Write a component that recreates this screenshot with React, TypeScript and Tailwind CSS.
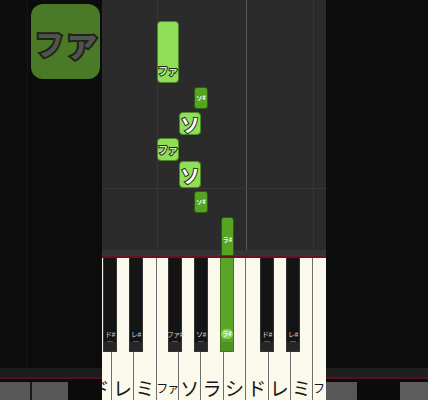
import React from "react";

const WHITE = ["ド", "レ", "ミ", "ファ", "ソ", "ラ", "シ", "ド", "レ", "ミ", "ファ"];

const BLACK = [
  { cls: "left-[1px]", t: "ド#" },
  { cls: "left-[27px]", t: "レ#" },
  { cls: "left-[66px]", t: "ファ#" },
  { cls: "left-[92px]", t: "ソ#" },
  { cls: "left-[118px]", t: "ラ#", on: true },
  { cls: "left-[158px]", t: "ド#" },
  { cls: "left-[184px]", t: "レ#" },
];

const stroke = "[paint-order:stroke_fill] [-webkit-text-stroke:2px_#1f2a18]";

function BgKeysLeft() {
  return (
    <div className="flex h-[32px] flex-col">
      <div className="h-[9px] bg-[#1c1c1c]" />
      <div className="h-[2px] bg-[#5a0f1c]" />
      <div className="h-[3px] bg-[#0c0c0c]" />
      <div className="flex h-[18px]">
        <div className="w-[30px] bg-[#575757]" />
        <div className="w-[2px] bg-[#1a1a1a]" />
        <div className="w-[36px] bg-[#575757]" />
        <div className="flex-1 bg-[#0b0b0b]" />
      </div>
    </div>
  );
}

function BgKeysRight() {
  return (
    <div className="flex h-[32px] flex-col">
      <div className="h-[9px] bg-[#1f1f1f]" />
      <div className="h-[2px] bg-[#5a0f1c]" />
      <div className="h-[3px] bg-[#0c0c0c]" />
      <div className="flex h-[18px]">
        <div className="w-[31px] bg-[#575757]" />
        <div className="w-[43px] rounded-t-[4px] bg-[#0b0b0b]" />
        <div className="flex-1 bg-[#5d5d5d]" />
      </div>
    </div>
  );
}

export default function App() {
  return (
    <div className="flex h-[400px] w-[428px] overflow-hidden bg-[#0c0c0c] font-['Noto_Sans_CJK_JP',sans-serif]">
      {/* left side */}
      <div className="flex w-[102px] flex-col">
        <div className="flex flex-1">
          <div className="w-[28px] border-r border-[#151515] bg-[#0d0d0d]" />
          <div className="pl-[3px] pt-[4px]">
            <div className="flex h-[75px] w-[69px] items-center justify-center rounded-[12px] bg-[#4a7a27] pb-[4px] pl-[2px]">
              <span className="flex items-baseline whitespace-nowrap font-bold leading-none text-[#525252] [paint-order:stroke_fill] [-webkit-text-stroke:4px_#1e2616]">
                <span className="text-[29px]">フ</span>
                <span className="text-[36px] tracking-[-2px]">ァ</span>
              </span>
            </div>
          </div>
        </div>
        <BgKeysLeft />
      </div>

      {/* center */}
      <div className="flex w-[224px] flex-col">
        <div className="relative h-[250px] bg-[#2b2b2b]">
          <div className="absolute left-[55px] top-0 h-full w-px bg-[#363636]" />
          <div className="absolute left-[144px] top-0 h-full w-px bg-[#585858]" />
          <div className="absolute left-[211px] top-0 h-full w-px bg-[#363636]" />
          <div className="absolute left-0 top-[188px] h-px w-full bg-[#363636]" />

          {/* notes */}
          <div className="absolute left-[55px] top-[21px] flex h-[62px] w-[22px] items-end justify-center rounded-[4px] border border-[#4f8a2a] bg-[#8fdf58] pb-[6px]">
            <span className={`text-[10px] font-bold leading-none text-[#c9f2a8] ${stroke}`}>ファ</span>
          </div>
          <div className="absolute left-[92px] top-[87px] flex h-[22px] w-[14px] items-center justify-center rounded-[3px] border border-[#2f5a16] bg-[#55a523]">
            <span className="text-[6px] font-bold leading-none text-white">ソ#</span>
          </div>
          <div className="absolute left-[77px] top-[112px] flex h-[23px] w-[22px] items-center justify-center rounded-[4px] border border-[#4f8a2a] bg-[#8fdf58]">
            <span className={`text-[19px] font-bold leading-none text-white ${stroke}`}>ソ</span>
          </div>
          <div className="absolute left-[55px] top-[138px] flex h-[23px] w-[22px] items-center justify-center rounded-[4px] border border-[#4f8a2a] bg-[#8fdf58]">
            <span className={`text-[10px] font-bold leading-none text-[#c9f2a8] ${stroke}`}>ファ</span>
          </div>
          <div className="absolute left-[77px] top-[161px] flex h-[27px] w-[22px] items-center justify-center rounded-[4px] border border-[#4f8a2a] bg-[#8fdf58]">
            <span className={`text-[19px] font-bold leading-none text-white ${stroke}`}>ソ</span>
          </div>
          <div className="absolute left-[92px] top-[191px] flex h-[22px] w-[14px] items-center justify-center rounded-[3px] border border-[#2f5a16] bg-[#55a523]">
            <span className="text-[6px] font-bold leading-none text-white">ソ#</span>
          </div>
          <div className="absolute left-[119px] top-[217px] z-10 flex h-[39px] w-[13px] items-end justify-center rounded-t-[3px] border border-[#2f5a16] bg-[#55a523] pb-[12px]">
            <span className="text-[6px] font-bold leading-none text-white">ラ#</span>
          </div>
        </div>
        <div className="h-[6px] bg-[#343434]" />
        <div className="h-[2px] bg-[#6a1020]" />
        <div className="relative h-[142px] overflow-hidden bg-[#fbf8ec]">
          <div className="ml-[-12.6px] flex h-full">
            {WHITE.map((n, i) => (
              <div
                key={i}
                className="flex h-full w-[22.4px] shrink-0 flex-col items-center justify-end border-r border-[#6e6e6e] pb-[2px]"
              >
                <span
                  className={
                    n === "ファ"
                      ? "whitespace-nowrap text-[12px] leading-[20px] tracking-[-1px] text-[#151515]"
                      : "whitespace-nowrap text-[19px] leading-[20px] text-[#151515]"
                  }
                >
                  {n}
                </span>
              </div>
            ))}
          </div>
          {BLACK.map((b, i) => (
            <div
              key={i}
              className={`absolute top-0 flex h-[94px] w-[14px] flex-col items-center justify-end border-x border-b ${b.cls} ${
                b.on ? "border-[#3f7a1a] bg-[#5aa427]" : "border-[#333] bg-[#141414]"
              }`}
            >
              {b.on ? (
                <div className="mb-[12px] flex h-[10px] w-[12px] items-center justify-center rounded-full bg-[#8ccf5c]">
                  <span className="whitespace-nowrap text-[6px] font-bold leading-none text-white">{b.t}</span>
                </div>
              ) : (
                <>
                  <span className="whitespace-nowrap text-[7px] leading-none tracking-[-0.5px] text-[#d0d0d0]">{b.t}</span>
                  <div className="mb-[9px] mt-[3px] h-px w-[6px] bg-[#555]" />
                </>
              )}
              <div className={`absolute bottom-0 h-[9px] w-full ${b.on ? "bg-[#4f9422]" : "bg-[#262626]"}`} />
            </div>
          ))}
        </div>
      </div>

      {/* right side */}
      <div className="flex flex-1 flex-col">
        <div className="flex-1 bg-[#0d0d0d]" />
        <BgKeysRight />
      </div>
    </div>
  );
}
